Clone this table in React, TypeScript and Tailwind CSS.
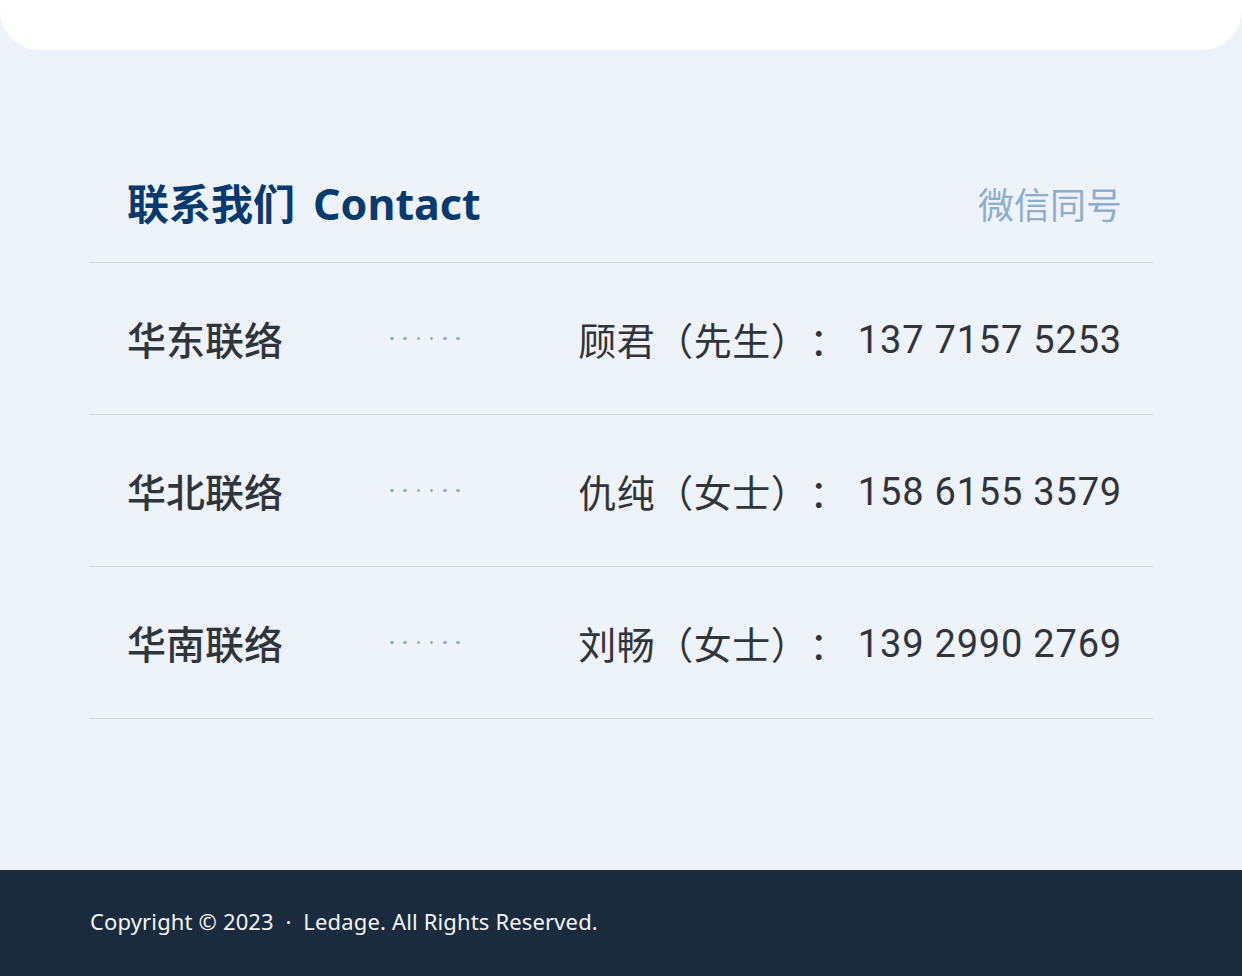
import React from "react";

const rows = [
  { region: "华东联络", name: "顾君", title: "先生", phone: "137 7157 5253" },
  { region: "华北联络", name: "仇纯", title: "女士", phone: "158 6155 3579" },
  { region: "华南联络", name: "刘畅", title: "女士", phone: "139 2990 2769" },
];

const cjk = { fontFamily: '"Noto Sans CJK SC", "Noto Sans", sans-serif' };

export default function App() {
  return (
    <div className="min-h-[976px] w-full bg-[#eef2f9] [text-spacing-trim:space-all]" style={cjk}>
      {/* top card edge */}
      <div className="h-[50px] rounded-b-[40px] bg-white" />

      <section className="px-[89px] pt-[122px] pb-[151px]">
        <div className="flex items-center justify-between border-b border-[#d3dae4] pl-[38px] pr-[31px] pb-[28px]">
          <h2 className="text-[42px] font-bold leading-[60px] text-[#083a6d]">
            联系我们
            <span className="ml-[18px] text-[43px]" style={{ fontFamily: '"Noto Sans", sans-serif' }}>
              Contact
            </span>
          </h2>
          <span className="text-[36px] leading-[50px] text-[#8eaece]">微信同号</span>
        </div>

        {rows.map((r) => (
          <div
            key={r.region}
            className="flex h-[152px] items-center border-b border-[#d3dae4] pl-[38px] pr-[31px]"
          >
            <span className="w-[263px] text-[39px] font-medium text-[#30343b]">{r.region}</span>
            <span className="flex gap-[9.8px]">
              {Array.from({ length: 6 }).map((_, i) => (
                <span key={i} className="h-[3.5px] w-[3.5px] rounded-full bg-[#8db1d2]" />
              ))}
            </span>
            <span className="ml-auto flex items-center text-[38px] text-[#30343b]">
              <span className="tracking-[0.5px]">
                {r.name}（{r.title}）：
              </span>
              <span
                className="ml-[10px] pt-[4px] tracking-[0.8px]"
                style={{ fontFamily: "Roboto, sans-serif" }}
              >
                {r.phone}
              </span>
            </span>
          </div>
        ))}
      </section>

      <footer className="flex h-[106px] items-center bg-[#1b2b3e] px-[90px] pb-[4px]">
        <p
          className="text-[22px] tracking-[0.15px] text-[#f2f4f7]"
          style={{ fontFamily: '"Noto Sans", sans-serif' }}
        >
          Copyright © 2023 &nbsp;·&nbsp; Ledage. All Rights Reserved.
        </p>
      </footer>
    </div>
  );
}
